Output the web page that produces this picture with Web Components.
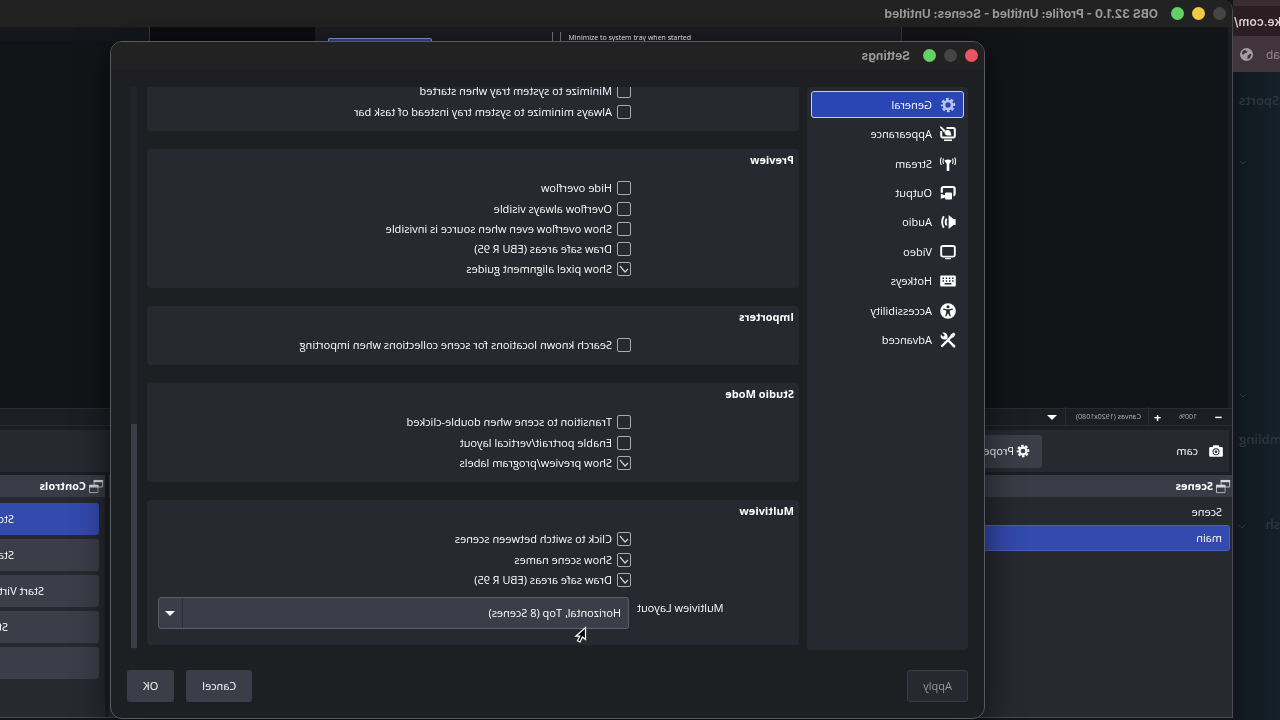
<!DOCTYPE html>
<html lang="en">
<head>
<meta charset="utf-8">
<title>OBS Settings</title>
<style>
    html, body { height: 100%; }
    body {
        margin: 0;
        overflow: hidden;
        background: #10161c;
        color: #fff;
        font: 11px/20px "Open Sans", "Noto Sans", sans-serif;
    }
</style>
</head>
<body>
<mirror-desktop>
    <browser-edge slot="back"></browser-edge>
    <obs-window slot="main"></obs-window>
    <settings-dialog slot="dialog"></settings-dialog>
</mirror-desktop>

<script>
const ICONS = {
    gear: `<circle cx="8" cy="8" r="4" fill="none" stroke="currentColor" stroke-width="2.6"/>
        <circle cx="8" cy="8" r="6" fill="none" stroke="currentColor" stroke-width="2.4" stroke-dasharray="2.8 1.91" stroke-dashoffset="1.4"/>`,
    appearance: `<path d="M9.500 2H2.800Q1.200 2 1.200 3.600v6.200q0 1.600 1.600 1.600h10.400q1.600 0 1.600-1.600V5" fill="none" stroke="currentColor" stroke-width="2"/>
        <path d="M4 13.400h8v1.700H4zM15.400 0 10.400 4.600l1.600 1.600L16 1.400zM10 4.200q-4.600-.6-4.800 2.800-.1 1.600-.8 2.200 6.400 1.400 7.200-2.800z" fill="currentColor"/>`,
    stream: `<path d="M4.400 4.400q3.600-2 7.200 0L9.300 8v7H6.700V8z" fill="currentColor"/>
        <path d="M3.600 2.600q-1.400 2.600 0 5.400M1.300 1.600q-1.800 3.600 0 7.400M12.400 2.600q1.400 2.600 0 5.400M14.700 1.600q1.800 3.600 0 7.400" fill="none" stroke="currentColor" stroke-width="1.100"/>`,
    output: `<path d="M2.600 10.400Q1.400 10.200 1.400 8.800V3.600Q1.400 2 3 2h9.600q1.600 0 1.600 1.600v4.200" fill="none" stroke="currentColor" stroke-width="2.200"/>
        <path d="M5.200 7.600h4.600q1.200 0 1.200 1.200v1.400l4.200-1.400v5L11 12.600v.6q0 1.400-1.200 1.400H5.200Q4 14.600 4 13.200V8.800q0-1.200 1.200-1.200z" fill="currentColor"/>`,
    audio: `<path d="M.4 5H2.600L7.400 1v14L2.600 11H.4z" fill="currentColor"/>
        <path d="M9.400 4.600q1.900 3.400 0 6.800M12.200 2.200q3.400 5.800 0 11.600" fill="none" stroke="currentColor" stroke-width="1.900"/>`,
    video: `<rect x="1.200" y="2" width="13.600" height="10.600" rx="1.800" fill="none" stroke="currentColor" stroke-width="1.900"/>
        <path d="M5 14h6v1.200H5z" fill="currentColor"/>`,
    hotkeys: `<path fill-rule="evenodd" d="M1.400 2.400h13.200q1.200 0 1.200 1.200v8.800q0 1.200-1.200 1.200H1.400Q.2 13.600.2 12.400V3.600q0-1.200 1.200-1.200zM2.400 4.600v1.400h1.500V4.600zm3.200 0v1.400h1.500V4.600zm3.200 0v1.400h1.500V4.600zm3.200 0v1.400h1.500V4.600zM2.400 7.300v1.400h1.500V7.300zm3.200 0v1.400h1.500V7.300zm3.200 0v1.400h1.500V7.300zm3.200 0v1.400h1.500V7.300zM4.600 10.100v1.400h6.800v-1.400z" fill="currentColor"/>`,
    accessibility: `<circle cx="8" cy="8" r="7.800" fill="currentColor"/>
        <g fill="#272930"><circle cx="8" cy="3.700" r="1.500"/>
        <path d="M3.400 5.600 7 6.200h2l3.600-.6.200 1.200-3 .8v1.800l1 3.800-1.200.4L8.300 10.400h-.6l-1.300 3.200-1.200-.4 1-3.800V7.600l-3-.8z"/></g>`,
    advanced: `<path d="M5.600 5.600 14 14" stroke="currentColor" stroke-width="2.400" stroke-linecap="round"/>
        <path d="M.6 2.200 2.200.6 5.200 2.400l1.800 4.400L2.400 5.200zM.9 13.200l6-5.400 1.500 1.500-5.600 6q-1 .7-1.800-.1t-.1-2zM8.600 6.600q-.8-3 1-4.800Q11.400 0 13.600.8l-2.400 2.400 1.600 1.600 2.400-2.400q.8 2.400-.8 4t-4.400 1z" fill="currentColor"/>`,
    camera: `<path fill-rule="evenodd" d="M5 1.500h6l1 2h2.600q1.200 0 1.200 1.200v8.600q0 1.200-1.200 1.200H1.400Q.2 14.500.2 13.300V4.700Q.2 3.500 1.400 3.500H4zm3 3.300a4 4 0 1 0 0 8 4 4 0 0 0 0-8z" fill="currentColor"/>
        <circle cx="8" cy="8.800" r="2.200" fill="none" stroke="currentColor" stroke-width="1.400"/>`,
    dock: `<path d="M1.500 1.500h9v7h-9zM6.500 6.500h9v8h-9z" fill="none" stroke="#c9c9cf"/>
        <path d="M7 7h8v7H7z" fill="#3a3b46"/>
        <path d="M1 1h10v2.500H1zM6 6.500h10V9H6z" fill="#d8d8dc"/>`,
    globe: `<path fill-rule="evenodd" d="M8 0a8 8 0 1 0 0 16A8 8 0 0 0 8 0zM2 7q2.600.4 3.600 1.600 1.600.6 1 2.200.4 1.200.2 3Q2.400 12.600 2 7zm7.400-5q-.6 2-2.600 2.200.2 1.800 2 2 1.600-.2 2.200 1.200 1 1.400 2.200.4Q15 3.600 9.400 2z" fill="currentColor"/>`
};

class ObsIcon extends HTMLElement {
    constructor() {
        super();
        this.attachShadow({ mode: 'open' });
    }

    connectedCallback() {
        this.shadowRoot.innerHTML = `
            <style>
                :host { display: block; flex: none; width: 16px; height: 16px; }
                svg { display: block; width: 100%; height: 100%; }
            </style>
            <svg viewBox="0 0 16 16" aria-hidden="true">${ICONS[this.getAttribute('name')]}</svg>
        `;
    }
}

// The whole desktop is seen as in a mirror, like a front camera feed.
class MirrorDesktop extends HTMLElement {
    constructor() {
        super();
        this.attachShadow({ mode: 'open' }).innerHTML = `
            <style>
                :host {
                    display: flex;
                    position: relative;
                    height: 100vh;
                    overflow: hidden;
                    transform: scaleX(-1);
                }
                ::slotted([slot="back"]) { flex: none; width: 47px; }
                ::slotted([slot="main"]) { flex: 1; min-width: 0; }
                ::slotted([slot="dialog"]) {
                    position: absolute;
                    inset: 41px 110px 1px 295px;
                }
            </style>
            <slot name="back"></slot>
            <slot name="main"></slot>
            <slot name="dialog"></slot>
        `;
    }
}

class BrowserEdge extends HTMLElement {
    constructor() {
        super();
        this.attachShadow({ mode: 'open' }).innerHTML = `
            <style>
                :host {
                    display: flex;
                    flex-direction: column;
                    overflow: hidden;
                    background: linear-gradient(90deg, #15202a, #10181d);
                    color: #2c373d;
                    font-size: 13px;
                    white-space: nowrap;
                }
                div { display: flex; align-items: center; justify-content: flex-end; flex: none; }
                .url {
                    height: 30px;
                    border-top: 6px solid #3b2e33;
                    background: #2b1d21;
                    color: #d6d0d2;
                    padding-right: 1px;
                    font: 600 12px Inter, sans-serif;
                }
                .marks { height: 36px; padding-right: 7px; gap: 13px; background: #41343a; color: #8f8689; font: 12px Inter, sans-serif; }
                .marks obs-icon { width: 13px; height: 13px; color: #a39da0; }
                .side { flex: 1; flex-direction: column; align-items: flex-end; justify-content: flex-start; padding: 18px 6px 0 0; }
                .side span { height: 20px; font-weight: 600; line-height: 20px; }
                .side svg { width: 8px; height: 5px; }
                .gap { flex: none; height: 50px; }
            </style>
            <div class="url">ke.com/</div>
            <div class="marks">ab <obs-icon name="globe"></obs-icon></div>
            <div class="side">
                <span>Sports</span>
                <i class="gap"></i>
                <svg viewBox="0 0 8 5"><path d="m1 1 3 3 3-3" fill="none" stroke="currentColor"/></svg>
                <i class="gap" style="height: 228px"></i>
                <svg viewBox="0 0 8 5"><path d="m1 1 3 3 3-3" fill="none" stroke="currentColor"/></svg>
                <i class="gap" style="height: 31px"></i>
                <span>mbling</span>
                <i class="gap" style="height: 65px"></i>
                <span style="align-self: flex-start">sh <svg viewBox="0 0 8 5" style="margin-left: 16px"><path d="m1 1 3 3 3-3" fill="none" stroke="currentColor"/></svg></span>
            </div>
        `;
    }
}

class TitleBar extends HTMLElement {
    constructor() {
        super();
        this.attachShadow({ mode: 'open' });
    }

    connectedCallback() {
        const lights = this.getAttribute('lights').split(' ');
        this.shadowRoot.innerHTML = `
            <style>
                :host {
                    display: flex;
                    flex: none;
                    align-items: center;
                    gap: 8px;
                    box-sizing: border-box;
                    height: 27px;
                    padding: 0 0 1px 6px;
                    background: #222223;
                    color: #9b9b9c;
                    font: 700 12px Inter, sans-serif;
                    white-space: nowrap;
                }
                i { width: 13px; height: 13px; border-radius: 50%; }
                .grey { background: #454546; }
                .yellow { background: #eecb46; }
                .green { background: #62d267; }
                .red { background: #ec5565; }
                span { margin-left: 5px; }
            </style>
            ${lights.map((light) => `<i class="${light}"></i>`).join('')}
            <span><slot></slot></span>
        `;
    }
}

class DockPanel extends HTMLElement {
    constructor() {
        super();
        this.attachShadow({ mode: 'open' });
    }

    connectedCallback() {
        this.shadowRoot.innerHTML = `
            <style>
                :host { display: flex; flex-direction: column; background: #272930; }
                header {
                    display: flex;
                    align-items: center;
                    flex: none;
                    gap: 3px;
                    height: 22px;
                    padding-left: 1px;
                    background: #3a3b46;
                    font-weight: 700;
                }
                obs-icon { width: 15px; height: 15px; }
            </style>
            <header><obs-icon name="dock"></obs-icon>${this.getAttribute('label')}</header>
            <slot></slot>
        `;
    }
}

class ObsWindow extends HTMLElement {
    constructor() {
        super();
        this.attachShadow({ mode: 'open' }).innerHTML = `
            <style>
                :host {
                    display: flex;
                    flex-direction: column;
                    box-sizing: border-box;
                    height: calc(100% - 2px);
                    border: solid #4a4c50;
                    border-width: 0 0 1px 1px;
                    border-radius: 10px 0 0 0;
                    overflow: hidden;
                    background: #1d1e23;
                    white-space: nowrap;
                }
                .preview {
                    display: flex;
                    flex: 1;
                    margin-left: 4px;
                    background: #131418;
                }
                .feed {
                    display: flex;
                    align-items: flex-start;
                    flex: 1;
                    margin-left: 326px;
                    border-left: 1px solid #3a3b3f;
                    background: linear-gradient(#1c1d22 14px, #131418 14px);
                }
                .feed span { font-size: 7px; line-height: 20px; transform: scaleX(-1); margin: 1px 0 0 210px; }
                .feed i { width: 6px; height: 10px; margin: 5px 0 0 1px; border-left: 1px solid #77787c; }
                .feed span + i { margin-left: 8px; }
                .feed b { width: 102px; height: 6px; margin: 11px 0 0 114px; background: #3546a0; border: solid #8d98d8; border-width: 1px 1px 0; border-radius: 2px 2px 0 0; }
                .feed u { flex: none; width: 165px; height: 14px; margin-left: 13px; background: #0c0d10; border-right: 1px solid #3a3b3f; }
                .feed s { flex: 1; height: 14px; background: #14171c; }
                .zoom {
                    display: flex;
                    align-items: center;
                    height: 16px;
                    flex: none;
                    border: solid #2a2b30;
                    border-width: 1px 0;
                    padding-left: 8px;
                    color: #b4b5b9;
                    font-size: 7px;
                }
                .zoom button { width: 11px; padding: 0; border: 0; background: none; color: #fff; font: 700 13px/14px "Open Sans", sans-serif; }
                .zoom .pct { width: 50px; text-align: center; }
                .zoom .canvas { margin-left: 3px; border: solid #2a2b30; border-width: 0 1px; padding: 0 10px 0 7px; }
                .drop { width: 0; margin-left: 8px; border: 5px solid transparent; border-top-color: #fff; border-bottom: 0; }
                .tools {
                    display: flex;
                    align-items: center;
                    flex: none;
                    height: 42px;
                    margin: 4px 0 3px 3px;
                    padding-left: 6px;
                    background: #272930;
                }
                .tools obs-icon { width: 14px; height: 14px; }
                .tools span { width: 156px; margin-left: 11px; }
                .tools button {
                    display: flex;
                    align-items: center;
                    gap: 2px;
                    width: 160px;
                    height: 33px;
                    padding-left: 12px;
                    border: 0;
                    border-radius: 3px;
                    background: #3c3d49;
                    color: inherit;
                    font: inherit;
                }
                .docks { display: flex; flex: none; gap: 4px; height: 242px; }
                .scenes { flex: 1; }
                .controls { width: 105px; overflow: hidden; }
                ul { margin: 0; padding: 2px 2px 0; list-style: none; }
                li { height: 26px; padding-left: 8px; line-height: 25px; box-sizing: border-box; }
                li[aria-current] { border: 1px solid #4a5fc4; border-radius: 3px; background: #334aae; padding-left: 7px; line-height: 23px; }
                nav { display: flex; flex-direction: column; gap: 4px; padding: 6px 0 0 6px; }
                nav button {
                    height: 32px;
                    padding: 0 0 0 var(--lead);
                    border: 0;
                    border-radius: 3px 0 0 3px;
                    background: #3c3d49;
                    color: inherit;
                    font: inherit;
                    text-align: left;
                }
                nav .on { background: #334aae; }
            </style>
            <title-bar lights="grey yellow green">OBS 32.1.0 - Profile: Untitled - Scenes: Untitled</title-bar>
            <div class="preview">
                <div class="feed">
                    <span>Minimize to system tray when started</span><i></i><i></i>
                    <b></b><u></u><s></s>
                </div>
            </div>
            <div class="zoom">
                <button aria-label="Zoom out">−</button>
                <span class="pct">100%</span>
                <button aria-label="Zoom in">+</button>
                <span class="canvas">Canvas (1920x1080)</span>
                <i class="drop"></i>
            </div>
            <div class="tools">
                <obs-icon name="camera"></obs-icon>
                <span>cam</span>
                <button><obs-icon name="gear"></obs-icon>Prope</button>
            </div>
            <div class="docks">
                <dock-panel class="scenes" label="Scenes">
                    <ul><li>Scene</li><li aria-current="true">main</li></ul>
                </dock-panel>
                <dock-panel class="controls" label="Controls">
                    <nav>
                        <button class="on" style="--lead: 85px">Sto</button>
                        <button style="--lead: 85px">Sta</button>
                        <button style="--lead: 55px">Start Virt</button>
                        <button style="--lead: 91px">St</button>
                        <button aria-label="Settings"></button>
                    </nav>
                </dock-panel>
            </div>
        `;
    }
}

class SettingsNav extends HTMLElement {
    constructor() {
        super();
        this.attachShadow({ mode: 'open' });
        const pages = ['General', 'Appearance', 'Stream', 'Output', 'Audio', 'Video', 'Hotkeys', 'Accessibility', 'Advanced'];
        this.shadowRoot.innerHTML = `
            <style>
                :host { display: block; border-radius: 4px; background: #272930; }
                nav { display: grid; grid-auto-rows: 1fr; height: 265px; padding: 3px 4px 0; }
                a {
                    display: flex;
                    align-items: center;
                    gap: 8px;
                    margin: 1px 0;
                    padding-left: 7px;
                    border: 1px solid transparent;
                    border-radius: 3px;
                    color: inherit;
                    text-decoration: none;
                }
                a[aria-current] { border-color: #c3cbee; background: #2a45b4; }
                a[aria-current] obs-icon { color: #b4c4f4; }
                obs-icon { width: 16px; height: 16px; }
            </style>
            <nav>
                ${pages.map((page, i) => `
                    <a href="#${page.toLowerCase()}"${i === 0 ? ' aria-current="page"' : ''}>
                        <obs-icon name="${i === 0 ? 'gear' : page.toLowerCase()}"></obs-icon>${page}
                    </a>`).join('')}
            </nav>
        `;
    }
}

class SettingsGroup extends HTMLElement {
    constructor() {
        super();
        this.attachShadow({ mode: 'open' });
    }

    connectedCallback() {
        const label = this.getAttribute('label');
        this.shadowRoot.innerHTML = `
            <style>
                :host { display: block; flex: none; padding-bottom: 9px; border-radius: 4px; background: #272930; }
                h2 { margin: 0 0 7px; padding-left: 5px; font: 700 11px/22px "Open Sans", sans-serif; }
                ::slotted(check-row:first-of-type) { margin-bottom: 1px; }
            </style>
            ${label ? `<h2>${label}</h2>` : ''}
            <slot></slot>
        `;
    }
}

class CheckRow extends HTMLElement {
    constructor() {
        super();
        this.attachShadow({ mode: 'open' });
    }

    connectedCallback() {
        this.shadowRoot.innerHTML = `
            <style>
                :host { display: flex; height: 20px; padding-left: 168px; }
                label { display: flex; align-items: center; gap: 5px; }
                input {
                    appearance: none;
                    box-sizing: border-box;
                    width: 14px;
                    height: 14px;
                    margin: 0;
                    border: 1px solid #a9aab0;
                    border-radius: 2px;
                }
                .box { display: grid; }
                .box > * { grid-area: 1 / 1; }
                svg { width: 14px; height: 14px; pointer-events: none; visibility: hidden; }
                input:checked + svg { visibility: visible; }
            </style>
            <label>
                <span class="box">
                    <input type="checkbox"${this.hasAttribute('checked') ? ' checked' : ''}>
                    <svg viewBox="0 0 14 14"><path d="m3 7 3 3 5-6" fill="none" stroke="#d0d0d6" stroke-width="1.200"/></svg>
                </span>
                <slot></slot>
            </label>
        `;
    }
}

class SettingsDialog extends HTMLElement {
    constructor() {
        super();
        this.attachShadow({ mode: 'open' }).innerHTML = `
            <style>
                :host {
                    display: flex;
                    flex-direction: column;
                    box-sizing: border-box;
                    border: 1px solid #58595c;
                    border-radius: 12px;
                    overflow: hidden;
                    background: #1e1f23;
                    box-shadow: 0 8px 36px rgba(0, 0, 0, .6);
                    white-space: nowrap;
                }
                .body { display: flex; flex: 1; min-height: 0; padding: 18px 20px 0 16px; }
                settings-nav { width: 161px; flex: none; }
                .pages {
                    display: flex;
                    flex: 1;
                    flex-direction: column;
                    justify-content: flex-end;
                    gap: 18px;
                    overflow: hidden;
                    margin: 0 10px 0 8px;
                    padding-bottom: 5px;
                }
                .bar { display: flex; flex-direction: column; justify-content: flex-end; width: 6px; padding-bottom: 2px; background: #232429; }
                .bar i { height: 40%; border-radius: 1px; background: #3c3d49; }
                .field { display: flex; gap: 8px; margin: 7px 11px 7px 0; }
                .field label { width: 162px; line-height: 22px; text-align: right; }
                .select { display: grid; flex: 1; align-items: center; }
                .select > * { grid-area: 1 / 1; }
                select {
                    appearance: none;
                    height: 32px;
                    padding: 0 32px 0 7px;
                    border: 1px solid #5b5d68;
                    border-radius: 3px;
                    background: linear-gradient(#2a2b33, #2a2b33) right 23px top / 1px 100% no-repeat #3c3d49;
                    color: inherit;
                    font: inherit;
                }
                .select i { justify-self: end; margin-right: 7px; border: 5px solid transparent; border-top-color: #fff; border-bottom: 0; pointer-events: none; }
                footer { display: flex; gap: 12px; flex: none; padding: 20px 16px 16px; }
                footer button {
                    height: 32px;
                    padding: 0 15px;
                    border: 1px solid transparent;
                    border-radius: 3px;
                    background: #3c3d49;
                    color: inherit;
                    font: inherit;
                }
                footer button:disabled { margin-right: auto; border-color: #3a3b43; background: #272930; color: #97989d; }
                .cursor { position: absolute; left: 397px; top: 584px; width: 13px; height: 18px; }
            </style>
            <title-bar lights="red grey green">Settings</title-bar>
            <div class="body">
                <settings-nav></settings-nav>
                <div class="pages">
                    <settings-group>
                        <check-row>Minimize to system tray when started</check-row>
                        <check-row>Always minimize to system tray instead of task bar</check-row>
                    </settings-group>
                    <settings-group label="Preview">
                        <check-row>Hide overflow</check-row>
                        <check-row>Overflow always visible</check-row>
                        <check-row>Show overflow even when source is invisible</check-row>
                        <check-row>Draw safe areas (EBU R 95)</check-row>
                        <check-row checked>Show pixel alignment guides</check-row>
                    </settings-group>
                    <settings-group label="Importers">
                        <check-row>Search known locations for scene collections when importing</check-row>
                    </settings-group>
                    <settings-group label="Studio Mode">
                        <check-row>Transition to scene when double-clicked</check-row>
                        <check-row>Enable portrait/vertical layout</check-row>
                        <check-row checked>Show preview/program labels</check-row>
                    </settings-group>
                    <settings-group label="Multiview">
                        <check-row checked>Click to switch between scenes</check-row>
                        <check-row checked>Show scene names</check-row>
                        <check-row checked>Draw safe areas (EBU R 95)</check-row>
                        <div class="field">
                            <label for="layout">Multiview Layout</label>
                            <div class="select">
                                <select id="layout"><option>Horizontal, Top (8 Scenes)</option></select>
                                <i></i>
                            </div>
                        </div>
                    </settings-group>
                </div>
                <div class="bar"><i></i></div>
            </div>
            <footer>
                <button disabled>Apply</button>
                <button>Cancel</button>
                <button>OK</button>
            </footer>
            <svg class="cursor" viewBox="0 0 13 18"><path d="M1.500 1.500v12l3-2.500 2.500 5 2.500-1.200-2.300-4.600h4z" fill="#000" stroke="#fff" stroke-width="1.200"/></svg>
        `;
    }
}

customElements.define('obs-icon', ObsIcon);
customElements.define('title-bar', TitleBar);
customElements.define('dock-panel', DockPanel);
customElements.define('check-row', CheckRow);
customElements.define('settings-group', SettingsGroup);
customElements.define('settings-nav', SettingsNav);
customElements.define('settings-dialog', SettingsDialog);
customElements.define('obs-window', ObsWindow);
customElements.define('browser-edge', BrowserEdge);
customElements.define('mirror-desktop', MirrorDesktop);
</script>
</body>
</html>
